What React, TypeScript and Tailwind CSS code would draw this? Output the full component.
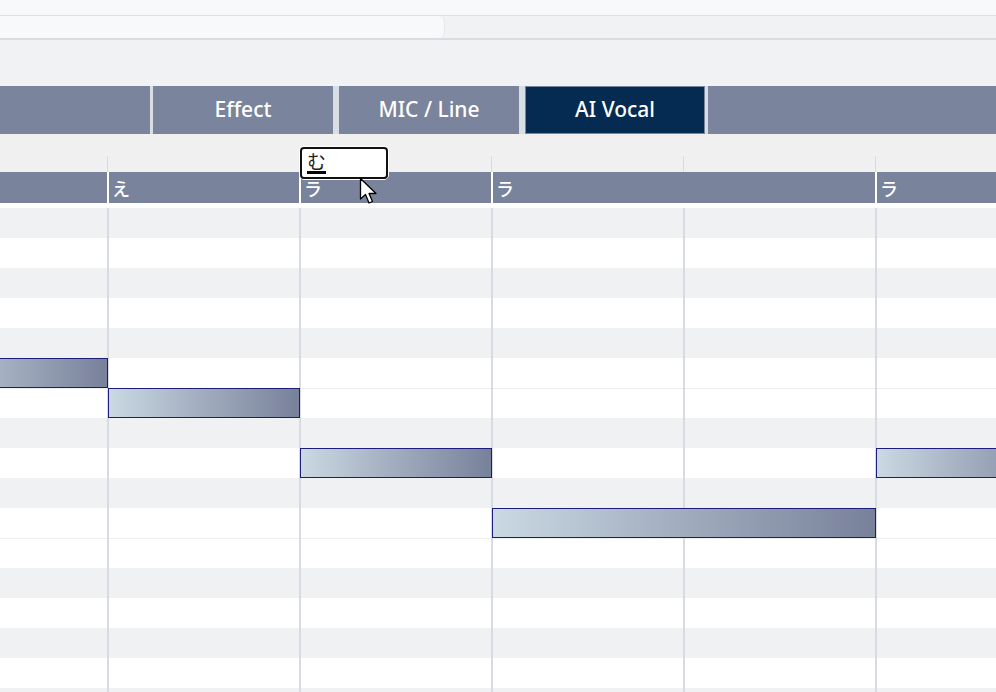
import React from "react"

const ROWS = [
  "b", "w", "b", "w", "b", "w", "wl", "b", "w", "b", "w", "wl", "b", "w", "b", "w", "b", "w",
]

const GRID_LINES = [107, 299, 491, 683, 875]

const NOTES = [
  { left: -84, width: 192, row: 5 },
  { left: 108, width: 192, row: 6 },
  { left: 300, width: 192, row: 8 },
  { left: 492, width: 384, row: 10 },
  { left: 876, width: 192, row: 8 },
]

const LYRICS = [
  { text: "", width: 107 },
  { text: "え", width: 192 },
  { text: "ラ", width: 192 },
  { text: "ラ", width: 384 },
  { text: "ラ", width: 192 },
]

function Tab({ label, active, className }: { label: string; active?: boolean; className: string }) {
  return (
    <div
      className={`${className} flex items-center justify-center text-[21px] font-medium text-white ${
        active ? "bg-[#062b52] border border-[#7a849c]" : "bg-[#7a849c]"
      }`}
    >
      {label}
    </div>
  )
}

export default function App() {
  return (
    <div className="relative h-[692px] w-[996px] overflow-hidden bg-[#f1f2f4] font-['Noto_Sans','Noto_Sans_CJK_JP',sans-serif]">
      {/* top toolbar */}
      <div className="h-[16px] border-b border-[#dee1e5] bg-[#f8f9fa]" />
      <div className="flex h-[24px] border-b-2 border-[#d9dde2]">
        <div className="w-[445px] rounded-r-[6px] border-r border-[#e3e6ea] bg-[#f8f9fa]" />
        <div className="flex-1 bg-[#f1f2f4]" />
      </div>
      <div className="h-[46px]" />

      {/* tabs */}
      <div className="flex h-[48px] bg-[#d9dde4]">
        <Tab label="" className="w-[150px]" />
        <div className="w-[3px]" />
        <Tab label="Effect" className="w-[180px]" />
        <div className="w-[6px]" />
        <Tab label="MIC / Line" className="w-[180px]" />
        <div className="w-[6px]" />
        <Tab label="AI Vocal" active className="w-[180px]" />
        <div className="w-[3px]" />
        <Tab label="" className="flex-1" />
      </div>

      {/* ruler ticks */}
      <div className="flex h-[38px] items-end bg-[#f0f0f0]">
        <div className="h-[16px] w-[107px] shrink-0" />
        {[0, 1, 2, 3, 4].map((i) => (
          <div key={i} className="h-[16px] w-[192px] shrink-0 border-l border-[#d8dce2]" />
        ))}
      </div>

      {/* lyric bar */}
      <div className="flex h-[31px] bg-[#79839b]">
        {LYRICS.map((l, i) => (
          <div
            key={i}
            style={{ width: l.width }}
            className={`shrink-0 pl-[3px] pt-[4px] font-['Noto_Sans_CJK_JP',sans-serif] text-[18px] font-medium leading-[24px] text-white ${
              i > 0 ? "border-l-2 border-white" : ""
            }`}
          >
            {l.text}
          </div>
        ))}
      </div>
      <div className="h-[5px] bg-white" />

      {/* piano roll */}
      <div className="relative">
        {ROWS.map((r, i) => (
          <div
            key={i}
            className={`h-[30px] ${r === "b" ? "bg-[#f0f1f3]" : "bg-white"} ${
              r === "wl" ? "border-t border-[#eceef0]" : ""
            }`}
          />
        ))}
        {GRID_LINES.map((x) => (
          <div
            key={x}
            style={{ left: x }}
            className="absolute top-0 bottom-0 w-[2px] bg-[#d8dce2]"
          />
        ))}
        {NOTES.map((n, i) => (
          <div
            key={i}
            style={{ left: n.left, width: n.width, top: n.row * 30 }}
            className="absolute h-[30px] border-[1.5px] border-[#1c1c7c] bg-gradient-to-r from-[#cbd9e3] to-[#78819a]"
          />
        ))}
      </div>

      {/* lyric edit box */}
      <div className="absolute left-[299px] top-[146px] h-[34px] w-[90px] rounded-[5px] border border-white">
        <div className="h-full w-full rounded-[4px] border-[2.5px] border-[#111] bg-white pl-[5px] pt-[1px] font-['Noto_Sans_CJK_JP',sans-serif] text-[19px] leading-[22px] text-[#222]">
          <span className="inline-block border-b-[3px] border-black leading-[20px]">む</span>
        </div>
      </div>

      {/* mouse cursor */}
      <svg className="absolute left-[359px] top-[177px]" width="22" height="30" viewBox="0 0 22 30">
        <path
          d="M1.5 1.5 L1.5 22 L6.5 17.5 L10 26 L13.5 24.5 L10 16.5 L17 16.5 Z"
          fill="#fff"
          stroke="#000"
          strokeWidth="1.3"
          strokeLinejoin="round"
        />
      </svg>
    </div>
  )
}
